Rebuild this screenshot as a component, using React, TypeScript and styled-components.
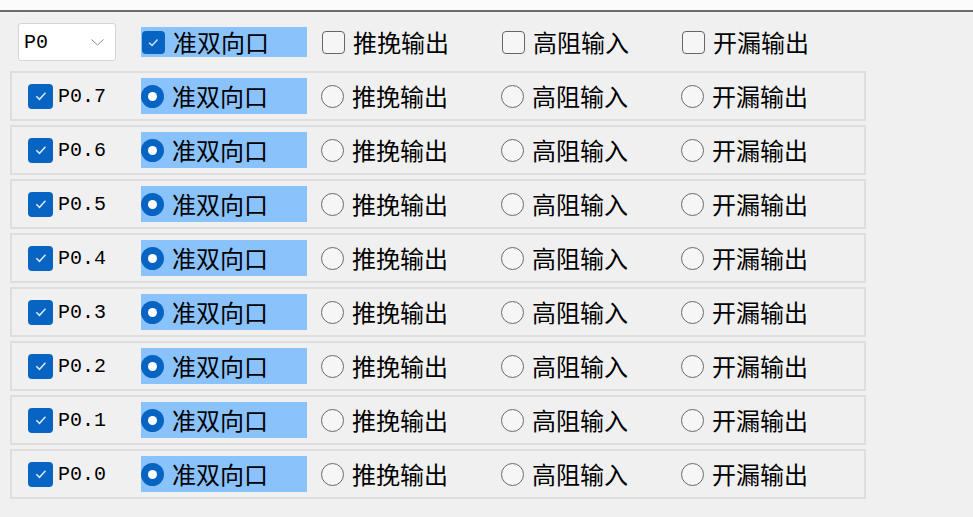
import styled, { createGlobalStyle } from 'styled-components';

const GlobalStyle = createGlobalStyle`
  body {
    margin: 0;
    background: #f0f0f0;
    font-family: "Noto Sans CJK SC", "Noto Sans", sans-serif;
    color: #000;
  }
`;

const MODES = ['准双向口', '推挽输出', '高阻输入', '开漏输出'];
const PINS = ['P0.7', 'P0.6', 'P0.5', 'P0.4', 'P0.3', 'P0.2', 'P0.1', 'P0.0'];

const TopStrip = styled.div`
  height: 10px;
  background: #fbfbfb;
  border-bottom: 2px solid #6b6b6b;
`;

const Panel = styled.div`
  padding: 11px 0 0 10px;
  display: flex;
  flex-direction: column;
  gap: 4px;
`;

const HeaderRow = styled.div`
  display: grid;
  grid-template-columns: 131px repeat(4, 180px);
  align-items: center;
  height: 38px;
  margin-bottom: 6px;
`;

const PinRow = styled.div`
  box-sizing: border-box;
  width: 856px;
  height: 50px;
  border: 2px solid #dedede;
  display: grid;
  grid-template-columns: 129px repeat(4, 180px);
  align-items: center;
`;

const Combo = styled.div`
  box-sizing: border-box;
  margin-left: 8px;
  width: 98px;
  height: 38px;
  background: #fff;
  border: 1px solid #d4d4d4;
  border-radius: 3px;
  display: flex;
  align-items: center;
  justify-content: space-between;
  padding: 0 11px 0 5px;
  font-family: "Liberation Mono", monospace;
  font-size: 20px;
`;

const PinLabel = styled.label`
  display: flex;
  align-items: center;
  gap: 5px;
  padding-left: 16px;
  font-family: "Liberation Mono", monospace;
  font-size: 20px;
`;

const Option = styled.div<{ $on?: boolean; $tall?: boolean }>`
  display: flex;
  align-items: center;
  gap: 8px;
  width: 166px;
  height: ${(p) => (p.$tall ? 36 : 30)}px;
  background: ${(p) => (p.$on ? '#8ac2fb' : 'transparent')};
  font-size: 24px;
  line-height: 1;
  white-space: nowrap;
`;

const Box = styled.span<{ $on?: boolean; $size: number; $indent?: number }>`
  box-sizing: border-box;
  flex: none;
  width: ${(p) => p.$size}px;
  height: ${(p) => p.$size}px;
  border-radius: 4px;
  margin-left: ${(p) => p.$indent ?? 0}px;
  display: flex;
  align-items: center;
  justify-content: center;
  background: ${(p) => (p.$on ? '#0764c2' : '#f6f6f6')};
  border: ${(p) => (p.$on ? 'none' : '1.5px solid #666')};
`;

const Radio = styled.span<{ $on?: boolean }>`
  box-sizing: border-box;
  flex: none;
  width: 23px;
  height: 23px;
  border-radius: 50%;
  display: flex;
  align-items: center;
  justify-content: center;
  background: ${(p) => (p.$on ? '#0764c2' : '#f6f6f6')};
  border: ${(p) => (p.$on ? 'none' : '1.5px solid #6a6a6a')};

  &::after {
    content: '';
    display: ${(p) => (p.$on ? 'block' : 'none')};
    width: 9px;
    height: 9px;
    border-radius: 50%;
    background: #fff;
  }
`;

const Tick = ({ size }: { size: number }) => (
  <svg width={size * 0.55} height={size * 0.55} viewBox="0 0 12 12">
    <path d="M2 6.3 L4.8 9 L10 3.3" fill="none" stroke="#d8e8f8" strokeWidth="1.3" />
  </svg>
);

const Chevron = () => (
  <svg width="13" height="7" viewBox="0 0 13 7">
    <path d="M0.5 0.5 L6.5 6 L12.5 0.5" fill="none" stroke="#8a8a8a" strokeWidth="1" />
  </svg>
);

const App = () => (
  <>
    <GlobalStyle />
    <TopStrip />
    <Panel>
      <HeaderRow>
        <Combo>
          P0
          <Chevron />
        </Combo>
        {MODES.map((m, i) => (
          <Option key={m} $on={i === 0}>
            <Box $on={i === 0} $size={23} $indent={1}>
              {i === 0 && <Tick size={23} />}
            </Box>
            {m}
          </Option>
        ))}
      </HeaderRow>
      {PINS.map((pin) => (
        <PinRow key={pin}>
          <PinLabel>
            <Box $on $size={25}>
              <Tick size={25} />
            </Box>
            {pin}
          </PinLabel>
          {MODES.map((m, i) => (
            <Option key={m} $on={i === 0} $tall>
              <Radio $on={i === 0} />
              {m}
            </Option>
          ))}
        </PinRow>
      ))}
    </Panel>
  </>
);

export default App;
